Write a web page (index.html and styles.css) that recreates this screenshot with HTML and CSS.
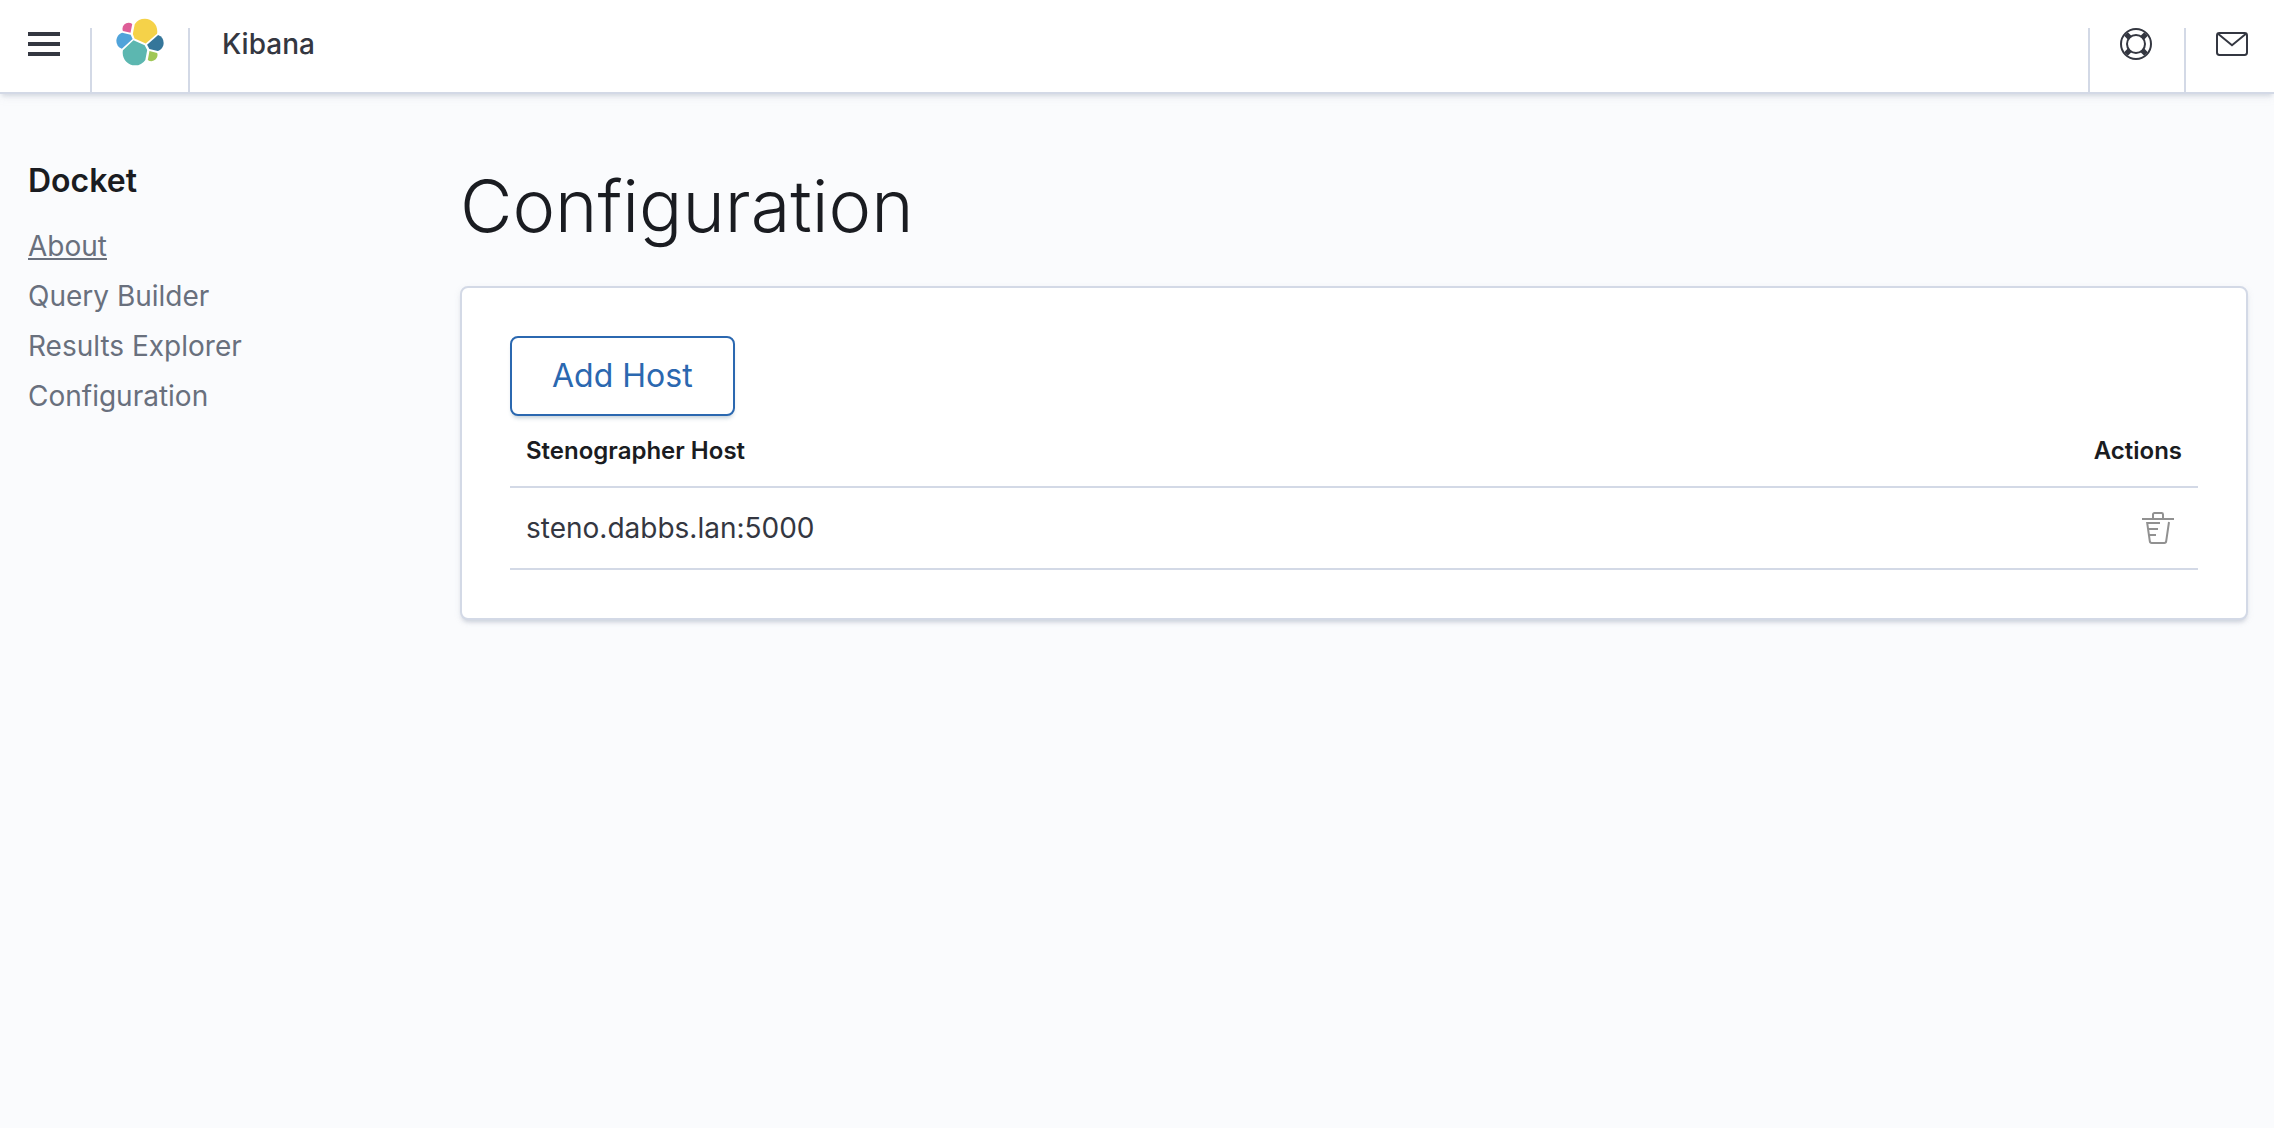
FILE: index.html
```html
<!DOCTYPE html>
<html lang="en">
<head>
  <meta charset="utf-8">
  <title>Kibana</title>
  <link rel="stylesheet" href="styles.css">
</head>
<body>
  <header class="header">
    <button class="header-item header-menu" type="button" aria-label="Menu">
      <svg class="icon" viewBox="0 0 16 16"><path d="M0 2h16v2H0zM0 7h16v2H0zM0 12h16v2H0z"/></svg>
    </button>
    <a class="header-item header-logo" href="#" aria-label="Home">
      <svg class="logo" viewBox="1 1 30 30">
        <path fill="#f5d249" d="M12.58 13.787l7.002 3.211 7.066-6.213a7.849 7.849 0 0 0 .152-1.557c0-4.287-3.464-7.774-7.722-7.774a7.708 7.708 0 0 0-6.38 3.405l-1.174 6.134z"/>
        <path fill="#5cb7b0" d="M5.333 21.228A7.964 7.964 0 0 0 5.18 22.8c0 4.3 3.475 7.798 7.746 7.798a7.733 7.733 0 0 0 6.403-3.425l1.166-6.102-1.556-2.989-7.03-3.217z"/>
        <path fill="#de5e98" d="M5.288 9.067l4.8 1.137L11.14 4.71a3.799 3.799 0 0 0-2.308-.783 3.813 3.813 0 0 0-3.794 3.821c0 .457.084.9.25 1.32z"/>
        <path fill="#50a3da" d="M4.872 10.214c-2.145.714-3.644 2.785-3.644 5.061a5.33 5.33 0 0 0 3.427 4.972l6.736-6.115-1.237-2.655z"/>
        <path fill="#a0c756" d="M20.873 27.173a3.77 3.77 0 0 0 2.3.784 3.81 3.81 0 0 0 3.792-3.818c0-.463-.081-.907-.245-1.322l-4.797-1.13z"/>
        <path fill="#35769a" d="M21.848 20.407l5.28 1.242c2.146-.713 3.645-2.784 3.645-5.061a5.336 5.336 0 0 0-3.434-4.974l-6.907 6.082z"/>
      </svg>
    </a>
    <span class="header-title">Kibana</span>
    <button class="header-item header-action" type="button" aria-label="Help">
      <svg class="icon" viewBox="0 0 16 16"><g fill="none" stroke="currentColor"><circle cx="8" cy="8" r="7.5"/><circle cx="8" cy="8" r="4.5"/><path stroke-width="2.6" d="M3 3l1.9 1.9M13 3l-1.9 1.9M3 13l1.9-1.9M13 13l-1.9-1.9"/></g></svg>
    </button>
    <button class="header-item header-action" type="button" aria-label="Newsfeed">
      <svg class="icon" viewBox="0 0 16 16"><g fill="none" stroke="currentColor"><rect x=".5" y="2.5" width="15" height="11" rx="1.2"/><path d="M1 2.9l7 5.7 7-5.7"/></g></svg>
    </button>
  </header>

  <div class="page">
    <nav class="side-nav" aria-label="Docket">
      <h2 class="side-title">Docket</h2>
      <a class="side-link side-link-active" href="#about">About</a>
      <a class="side-link" href="#query">Query Builder</a>
      <a class="side-link" href="#results">Results Explorer</a>
      <a class="side-link" href="#config">Configuration</a>
    </nav>

    <main class="content">
      <h1 class="page-title">Configuration</h1>
      <section class="panel">
        <button class="button" type="button">Add Host</button>
        <table class="table">
          <thead>
            <tr><th scope="col">Stenographer Host</th><th scope="col" class="cell-actions">Actions</th></tr>
          </thead>
          <tbody>
            <tr>
              <td>steno.dabbs.lan:5000</td>
              <td class="cell-actions">
                <button class="icon-button" type="button" aria-label="Delete host">
                  <svg class="icon" viewBox="0 0 16 16"><g fill="none" stroke="currentColor"><path d="M0 3.5h16M5.500 3.500V1.200a.7.7 0 0 1 .7-.7h3.600a.7.7 0 0 1 .7.7v2.300M9 5.500H2.600l1.300 9.100a1 1 0 0 0 1 .9h6.200a1 1 0 0 0 1-.9L13.500 5M3 8.500h5M3.500 11.500H7"/></g></svg>
                </button>
              </td>
            </tr>
          </tbody>
        </table>
      </section>
    </main>
  </div>
</body>
</html>
```
FILE: styles.css
```css
* {
  box-sizing: border-box;
}

body {
  margin: 0;
  background: #fafbfd;
  color: #343741;
  font-family: Inter, "Liberation Sans", sans-serif;
  font-size: 28px;
  line-height: 40px;
}

button {
  font: inherit;
  color: inherit;
  cursor: pointer;
}

.icon {
  display: block;
  width: 32px;
  height: 32px;
  fill: currentColor;
}

.header {
  display: flex;
  padding-top: 28px;
  background: #fff;
  border-bottom: 2px solid #d3d9e6;
  box-shadow: 0 4px 4px -2px rgba(152, 162, 179, .3), 0 2px 10px rgba(152, 162, 179, .15);
}

.header-item {
  display: flex;
  align-items: flex-start;
  height: 64px;
  padding: 0;
  background: none;
  border: 0 solid #d3d9e6;
}

.header-menu {
  padding: 0 30px 0 28px;
  border-right-width: 2px;
}

.header-logo {
  padding: 0 24px;
  border-right-width: 2px;
}

.logo {
  width: 48px;
  height: 48px;
  margin-top: -10px;
}

.header-title {
  flex: 1;
  padding-left: 32px;
  line-height: 32px;
  font-weight: 500;
}

.header-action {
  padding: 0 32px 0 30px;
  border-left-width: 2px;
}

.header-action:last-child {
  padding-right: 26px;
}

.page {
  display: flex;
  gap: 48px;
  padding: 64px 26px 48px 28px;
}

.side-nav {
  display: flex;
  flex: 0 0 384px;
  flex-direction: column;
  align-items: flex-start;
  gap: 10px;
}

.side-title {
  margin: 0 0 12px;
  color: #1a1c21;
  font-size: 32px;
  font-weight: 600;
  line-height: 46px;
}

.side-link {
  color: #69707d;
  text-decoration: none;
}

.side-link-active {
  text-decoration: underline;
  text-decoration-thickness: 2px;
  text-underline-offset: 2px;
}

.content {
  flex: 1;
  min-width: 0;
}

.page-title {
  margin: 0 0 32px;
  color: #1a1c21;
  font-size: 72px;
  font-weight: 300;
  line-height: 96px;
}

.panel {
  padding: 48px;
  background: #fff;
  border: 2px solid #d3d9e6;
  border-radius: 8px;
  box-shadow: 0 4px 4px -2px rgba(152, 162, 179, .4), 0 2px 6px rgba(152, 162, 179, .15);
}

.button {
  display: block;
  height: 80px;
  padding: 0 40px;
  background: #fff;
  border: 2px solid #2b68b0;
  border-radius: 8px;
  box-shadow: 0 4px 4px -2px rgba(54, 97, 126, .3);
  color: #2b68b0;
  font-size: 32px;
}

.table {
  width: 100%;
  border-collapse: separate;
  border-spacing: 0;
}

.table th,
.table td {
  padding: 16px;
  border-bottom: 2px solid #d3d9e6;
  text-align: left;
}

.table th {
  height: 72px;
  color: #1a1c21;
  font-size: 24px;
  font-weight: 600;
  line-height: 36px;
}

.table td {
  height: 82px;
}

.table .cell-actions {
  padding-top: 0;
  padding-bottom: 0;
  text-align: right;
}

.icon-button {
  display: inline-flex;
  padding: 8px;
  background: none;
  border: 0;
  color: #919191;
  vertical-align: middle;
}
```
